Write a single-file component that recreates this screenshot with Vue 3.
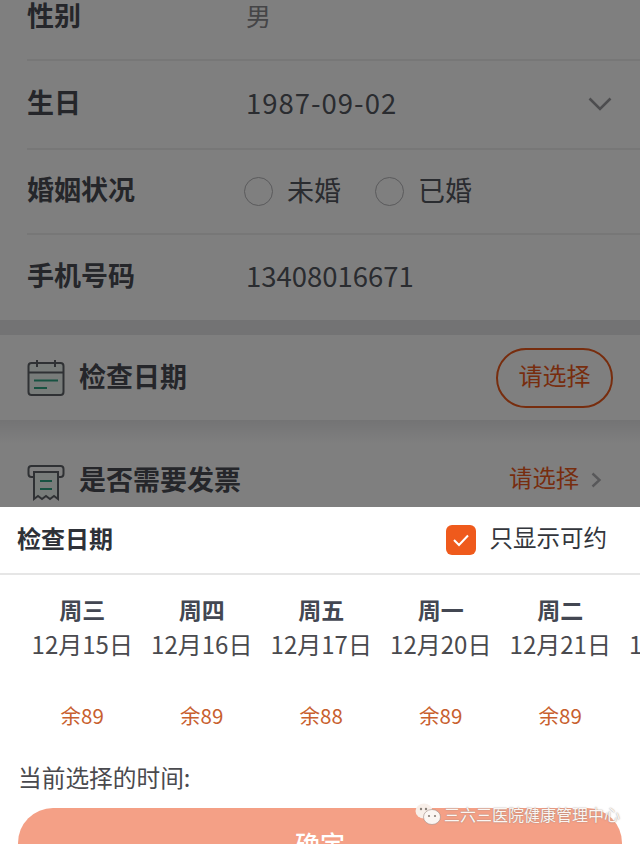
<template>
  <div class="page">
    <div class="form">
      <div class="row r1">
        <span class="label">性别</span>
        <span class="value muted">男</span>
      </div>
      <div class="row r2">
        <span class="label">生日</span>
        <span class="value birthday">1987-09-02</span>
        <svg class="chevron-down" width="24" height="14" viewBox="0 0 24 14" fill="none">
          <path d="M1.5 1.5 12 12 22.5 1.5" stroke="#9a9a9e" stroke-width="2.6" />
        </svg>
      </div>
      <div class="row r3">
        <span class="label">婚姻状况</span>
        <div class="radios">
          <label v-for="item in marriage" :key="item" class="radio">
            <i class="circle"></i>
            <span class="radio-text">{{ item }}</span>
          </label>
        </div>
      </div>
      <div class="row r4">
        <span class="label">手机号码</span>
        <span class="value phone">13408016671</span>
      </div>
    </div>

    <div class="card date-card">
      <svg class="card-icon" width="38" height="38" viewBox="0 0 38 38" fill="none">
        <rect x="1.5" y="4" width="35" height="32" rx="3" fill="#f0f8f5" stroke="#5f6368" stroke-width="2" />
        <path d="M1.5 13.5h35M10 1v7M28 1v7" stroke="#5f6368" stroke-width="2" />
        <path d="M7 21.5h24" stroke="#2fa583" stroke-width="2" />
        <path d="M7 29h13" stroke="#2fa583" stroke-width="2" />
      </svg>
      <span class="card-title">检查日期</span>
      <button class="pill">请选择</button>
    </div>

    <div class="card invoice-card">
      <svg class="card-icon" width="38" height="38" viewBox="0 0 38 38" fill="none">
        <path d="M7 13H4.5Q1.5 13 1.5 10V5Q1.5 2 4.5 2h29q3 0 3 3v5q0 3-3 3H31" stroke="#5f6368" stroke-width="2" />
        <path d="M7 8h24v27l-4-3-4 3-4-3-4 3-4-3-4 3z" fill="#f0f8f5" stroke="#5f6368" stroke-width="2" />
        <path d="M13 17h12M13 25h12" stroke="#2fa583" stroke-width="2" />
      </svg>
      <span class="card-title">是否需要发票</span>
      <span class="pick">请选择</span>
      <svg class="chevron-right" width="11" height="16" viewBox="0 0 11 16" fill="none">
        <path d="M1.5 1.5 8.5 8l-7 6.5" stroke="#b0b0b4" stroke-width="2.4" />
      </svg>
    </div>

    <div class="mask"></div>

    <div class="sheet">
      <div class="sheet-head">
        <span class="sheet-title">检查日期</span>
        <div class="only-open">
          <span class="check">
            <svg width="20" height="16" viewBox="0 0 20 16" fill="none">
              <path d="M3 8l5 5L17 3.5" stroke="#fff" stroke-width="2" />
            </svg>
          </span>
          <span class="only-text">只显示可约</span>
        </div>
      </div>

      <div class="days">
        <div v-for="day in days" :key="day.date" class="day">
          <div class="week">{{ day.week }}</div>
          <div class="date">{{ day.date }}</div>
          <div class="left">{{ day.left }}</div>
        </div>
      </div>

      <div class="current">当前选择的时间:</div>
      <button class="confirm">确定</button>

      <div class="watermark">
        <svg width="26" height="22" viewBox="0 0 26 22">
          <ellipse cx="9" cy="8" rx="8.5" ry="7.5" fill="#f8efe9" />
          <ellipse cx="17" cy="14" rx="8.5" ry="7.5" fill="#fbf6f3" stroke="#a08c84" stroke-width=".6" />
          <circle cx="6" cy="6" r="1.2" fill="#8a8078" />
          <circle cx="11" cy="6" r="1.2" fill="#8a8078" />
          <circle cx="14" cy="13" r="1.1" fill="#8a8078" />
          <circle cx="20" cy="13" r="1.1" fill="#8a8078" />
        </svg>
        <span>三六三医院健康管理中心</span>
      </div>
    </div>
  </div>
</template>

<script setup>
const marriage = ['未婚', '已婚']

const days = [
  { week: '周三', date: '12月15日', left: '余89' },
  { week: '周四', date: '12月16日', left: '余89' },
  { week: '周五', date: '12月17日', left: '余88' },
  { week: '周一', date: '12月20日', left: '余89' },
  { week: '周二', date: '12月21日', left: '余89' },
  { week: '周三', date: '12月22日', left: '余89' }
]
</script>

<style>
html,
body {
  margin: 0;
  background: #808082;
}
</style>

<style scoped>
.page {
  position: relative;
  width: 640px;
  height: 844px;
  overflow: hidden;
  background: #e6e6e8;
  font-family: "Noto Sans CJK SC", "Noto Sans", sans-serif;
  color: #555860;
}

.form {
  margin-top: -28px;
  padding-left: 27px;
  height: 348px;
  background: #fff;
}

.row {
  display: flex;
  align-items: center;
  border-bottom: 2px solid #efefef;
  padding-right: 28px;
}

.r1,
.r2 {
  height: 87px;
}

.r3 {
  height: 83px;
}

.r4 {
  height: 85px;
  border-bottom: none;
}

.label {
  width: 219px;
  padding-bottom: 7px;
  font-size: 27px;
  font-weight: 700;
  line-height: 1;
  color: #4a4d55;
}

.r1 .label {
  padding-bottom: 3px;
}

.value {
  padding-bottom: 4px;
  font-size: 27.5px;
  line-height: 1;
  color: #555860;
}

.birthday {
  letter-spacing: 1px;
}

.muted {
  padding-bottom: 0;
  color: #8a8a8e;
  font-size: 25px;
}

.chevron-down {
  margin-left: auto;
  margin-bottom: 2px;
}

.radios {
  display: flex;
  margin-left: -2px;
  gap: 34px;
}

.radio {
  display: flex;
  align-items: center;
  gap: 14px;
  font-size: 27px;
  line-height: 1;
}

.radio-text {
  padding-bottom: 5px;
}

.circle {
  width: 27px;
  height: 27px;
  border: 1.5px solid #b4b4b8;
  border-radius: 50%;
}

.card {
  display: flex;
  align-items: center;
  padding: 0 27px;
  background: #fff;
}

.date-card {
  margin-top: 15px;
  height: 85px;
}

.invoice-card {
  height: 120px;
  padding-right: 38px;
  background: linear-gradient(#e8e8ea, #fff 24px);
}

.card-icon {
  flex: none;
  margin-right: 14px;
}

.invoice-card .card-icon {
  margin-top: 6px;
}

.card-title {
  padding-bottom: 4px;
  font-size: 27px;
  font-weight: 700;
  line-height: 1;
  color: #4a4d55;
}

.pill {
  margin-left: auto;
  width: 117px;
  height: 60px;
  border: 2px solid #ef5a1c;
  border-radius: 30px;
  background: none;
  padding: 0 0 6px;
  font-family: inherit;
  font-size: 24px;
  color: #ef5a1c;
}

.pick {
  margin-left: auto;
  margin-right: 12px;
  padding-bottom: 4px;
  font-size: 23.3px;
  line-height: 1;
  color: #ef5a1c;
}

.mask {
  position: absolute;
  inset: 0;
  background: rgba(0, 0, 0, 0.5);
}

.sheet {
  position: absolute;
  left: 0;
  right: 0;
  bottom: 0;
  height: 337px;
  overflow: hidden;
  background: #fff;
}

.sheet-head {
  display: flex;
  align-items: center;
  justify-content: space-between;
  height: 66px;
  padding: 0 33px 0 17px;
  border-bottom: 2px solid #e6e6e6;
}

.sheet-title {
  padding-bottom: 5px;
  font-size: 24px;
  font-weight: 700;
  line-height: 1;
  color: #2e3138;
}

.only-open {
  display: flex;
  align-items: center;
  gap: 14px;
  font-size: 23.5px;
  line-height: 1;
  color: #33363c;
}

.only-text {
  padding-bottom: 4px;
}

.check {
  display: flex;
  align-items: center;
  justify-content: center;
  width: 30px;
  height: 30px;
  border-radius: 6px;
  background: #ef5a1c;
}

.days {
  display: flex;
  padding-left: 22.5px;
  margin-top: 20px;
}

.day {
  flex: none;
  width: 119.5px;
  text-align: center;
  white-space: nowrap;
}

.week {
  font-size: 23px;
  font-weight: 700;
  line-height: 28px;
  color: #434752;
}

.date {
  margin-top: 6px;
  font-size: 24px;
  line-height: 30px;
  color: #4a4a4e;
}

.left {
  margin-top: 41px;
  font-size: 20.5px;
  line-height: 30px;
  color: #c8602e;
}

.current {
  margin: 32px 0 0 18px;
  font-size: 23.7px;
  line-height: 30px;
  color: #4a4a4e;
}

.confirm {
  display: block;
  width: 604px;
  height: 70px;
  margin: 16px 0 0 18px;
  padding: 0;
  border: none;
  border-radius: 35px;
  background: #f4a086;
  font-family: inherit;
  font-size: 25px;
  font-weight: 500;
  color: #fff;
}

.watermark {
  position: absolute;
  left: 415px;
  top: 296px;
  display: flex;
  align-items: center;
  gap: 3px;
  font-size: 16px;
  line-height: 20px;
  color: #fbf6f3;
  text-shadow: 0 0 1.5px #8a7c76;
  white-space: nowrap;
}
</style>
